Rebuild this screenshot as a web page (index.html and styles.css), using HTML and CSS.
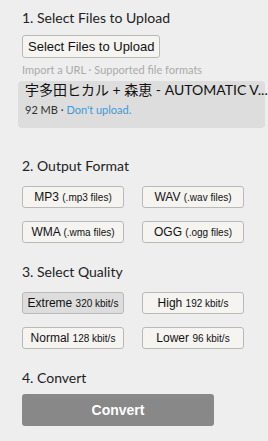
FILE: index.html
```html
<!DOCTYPE html>
<html>
<head>
<meta charset="utf-8">
<link rel="stylesheet" href="styles.css">
</head>
<body>
<div class="page">
  <section class="step step-1">
    <h2 class="step-title">1. Select Files to Upload</h2>
    <button class="btn btn-select">Select Files to Upload</button>
    <div class="hint">Import a URL · Supported file formats</div>
    <div class="file-box">
      <div class="file-name">宇多田ヒカル + 森恵 - AUTOMATIC V...</div>
      <div class="file-meta">92 MB · <span class="link">Don't upload.</span></div>
    </div>
  </section>
  <section class="step step-2">
    <h2 class="step-title">2. Output Format</h2>
    <div class="grid">
      <button class="btn opt">MP3 <small>(.mp3 files)</small></button>
      <button class="btn opt">WAV <small>(.wav files)</small></button>
      <button class="btn opt">WMA <small>(.wma files)</small></button>
      <button class="btn opt">OGG <small>(.ogg files)</small></button>
    </div>
  </section>
  <section class="step step-3">
    <h2 class="step-title">3. Select Quality</h2>
    <div class="grid">
      <button class="btn opt selected">Extreme <small>320 kbit/s</small></button>
      <button class="btn opt">High <small>192 kbit/s</small></button>
      <button class="btn opt">Normal <small>128 kbit/s</small></button>
      <button class="btn opt">Lower <small>96 kbit/s</small></button>
    </div>
  </section>
  <section class="step step-4">
    <h2 class="step-title">4. Convert</h2>
    <button class="btn-convert">Convert</button>
  </section>
</div>
</body>
</html>
```
FILE: styles.css
```css
html, body {
  margin: 0;
  padding: 0;
  background: #eeeeee;
}
body {
  font-family: Lato, "Noto Sans CJK JP", sans-serif;
  color: #222;
}
.page {
  padding: 8px 3px 0 22px;
}
.step-title {
  margin: 0;
  font-size: 14px;
  font-weight: 400;
  line-height: 20px;
  color: #222;
}
.btn {
  font-family: "Liberation Sans", Arial, sans-serif;
  background: #f5f4f1;
  border: 1px solid #b9b9b9;
  border-radius: 3px;
  color: #111;
  padding: 0;
  margin: 0;
  cursor: pointer;
}
.btn-select {
  margin-top: 7px;
  height: 23px;
  padding: 0 5px;
  font-size: 13px;
}
.hint {
  margin-top: 5px;
  font-size: 11px;
  line-height: 14px;
  color: #aaaaaa;
}
.file-box {
  margin: 4px 0 0 -4px;
  background: #dddddd;
  border-radius: 4px;
  height: 47px;
  padding: 0 0 0 7px;
  box-sizing: border-box;
}
.file-name {
  font-size: 14px;
  line-height: 18px;
  padding-top: 0;
  color: #111;
  white-space: nowrap;
}
.file-meta {
  margin-top: 4px;
  font-size: 11px;
  line-height: 14px;
  color: #333;
}
.link {
  color: #3c9ad8;
}
.step-2 {
  margin-top: 28px;
}
.grid {
  display: grid;
  grid-template-columns: 102px 102px;
  grid-auto-rows: 22px;
  column-gap: 18px;
  row-gap: 13px;
  margin-top: 10px;
}
.opt {
  height: 22px;
  font-size: 12px;
}
.opt small {
  font-size: 10px;
}
.opt.selected {
  background: #dddddd;
}
.step-3 {
  margin-top: 19px;
}
.step-4 {
  margin-top: 19px;
}
.btn-convert {
  display: block;
  margin-top: 6px;
  width: 192px;
  height: 32px;
  border: none;
  border-radius: 3px;
  background: #888888;
  color: #fff;
  font-family: "Liberation Sans", Arial, sans-serif;
  font-weight: 700;
  font-size: 14px;
}
```
